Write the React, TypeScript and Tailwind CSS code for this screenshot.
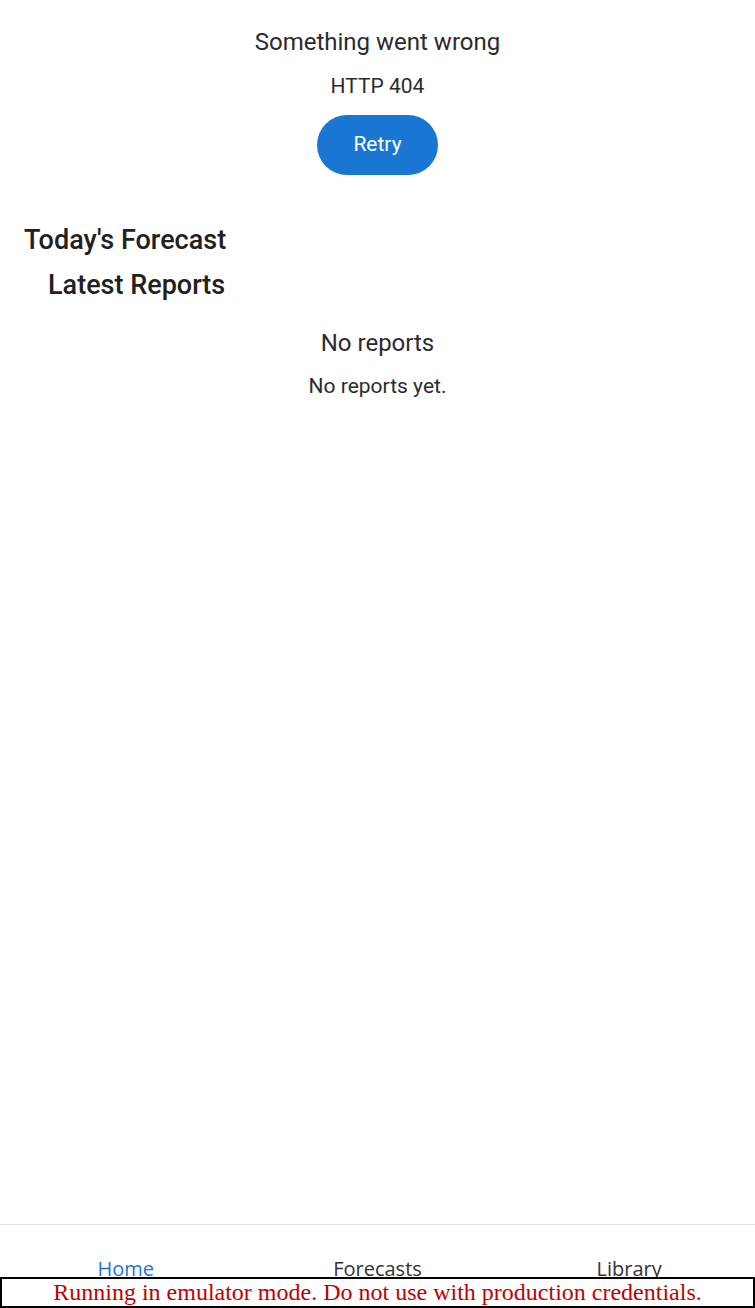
import React from "react";

export default function App() {
  return (
    <div className="relative flex h-screen flex-col bg-white text-[#212121]" style={{ fontFamily: "Roboto, 'Liberation Sans', sans-serif" }}>
      <div className="flex-1">
        <div className="flex flex-col items-center pt-[27px]">
          <div className="text-[24px] leading-[30px] text-[#2b2b2b]">Something went wrong</div>
          <div className="mt-[16px] text-[21px] leading-[26px] text-[#2b2b2b]">HTTP 404</div>
          <button className="mt-[16px] h-[60px] w-[121px] rounded-full bg-[#1976d2] text-[21px] text-white">Retry</button>
        </div>
        <div className="mt-[48px] pl-[24px] text-[27px] font-medium leading-[34px] text-[#212121]">Today's Forecast</div>
        <div className="mt-[11px] pl-[48px] text-[27px] font-medium leading-[34px] text-[#212121]">Latest Reports</div>
        <div className="mt-[25px] flex flex-col items-center">
          <div className="text-[24px] leading-[32px] text-[#2b2b2b]">No reports</div>
          <div className="mt-[14px] text-[21px] leading-[26px] text-[#2b2b2b]">No reports yet.</div>
        </div>
      </div>
      <div className="grid h-[84px] grid-cols-3 border-t border-[#e0e0e0]" style={{ fontFamily: "'Open Sans', 'Noto Sans', sans-serif" }}>
        <div className="flex items-end justify-center pb-[26px] text-[20px] leading-[26px] text-[#1976d2]">Home</div>
        <div className="flex items-end justify-center pb-[26px] text-[20px] leading-[26px] text-[#333]">Forecasts</div>
        <div className="flex items-end justify-center pb-[26px] text-[20px] leading-[26px] text-[#333]">Library</div>
      </div>
      <div className="absolute bottom-0 left-0 right-0 h-[31px] border-2 border-black bg-white text-center text-[24px] leading-[26px] text-[#c00000]" style={{ fontFamily: "'Liberation Serif', serif" }}>
        Running in emulator mode. Do not use with production credentials.
      </div>
    </div>
  );
}
